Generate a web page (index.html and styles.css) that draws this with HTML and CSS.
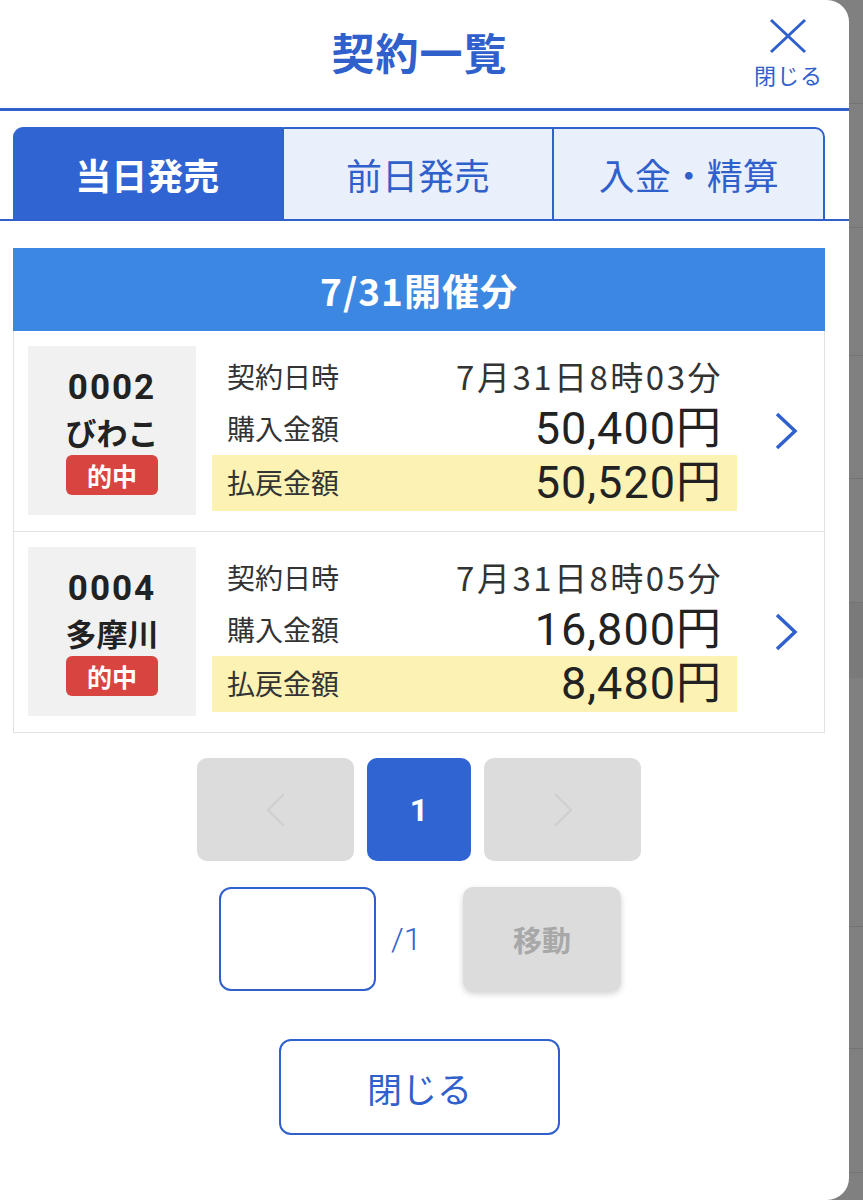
FILE: index.html
```html
<!DOCTYPE html>
<html lang="ja">
<head>
    <meta charset="UTF-8">
    <title>契約一覧</title>
    <meta name="viewport" content="width=device-width, initial-scale=1.0">
    <link rel="stylesheet" href="styles.css">
</head>
<body>

<div class="modal">
    <header class="modal-header">
        <h1>契約一覧</h1>
        <button class="close-x" type="button">
            <svg width="40" height="36" viewBox="0 0 40 36"><path d="M3 2 L37 34 M37 2 L3 34" stroke="#3060cc" stroke-width="3" fill="none"/></svg>
            <span>閉じる</span>
        </button>
    </header>

    <nav class="tabs">
        <div class="tab active">当日発売</div>
        <div class="tab">前日発売</div>
        <div class="tab last">入金・精算</div>
    </nav>

    <section class="day">
        <h2>7/31開催分</h2>

        <div class="contract">
            <div class="race">
                <p class="race-no">0002</p>
                <p class="race-name">びわこ</p>
                <span class="hit">的中</span>
            </div>
            <div class="info">
                <div class="row"><span class="label">契約日時</span><span class="date">7月31日8時03分</span></div>
                <div class="row"><span class="label">購入金額</span><span class="amount">50,400円</span></div>
                <div class="row payout"><span class="label">払戻金額</span><span class="amount">50,520円</span></div>
            </div>
            <div class="more">
                <svg width="26" height="40" viewBox="0 0 26 40"><path d="M4 3 L22 20 L4 37" stroke="#3060cc" stroke-width="3.5" fill="none"/></svg>
            </div>
        </div>

        <div class="contract">
            <div class="race">
                <p class="race-no">0004</p>
                <p class="race-name">多摩川</p>
                <span class="hit">的中</span>
            </div>
            <div class="info">
                <div class="row"><span class="label">契約日時</span><span class="date">7月31日8時05分</span></div>
                <div class="row"><span class="label">購入金額</span><span class="amount">16,800円</span></div>
                <div class="row payout"><span class="label">払戻金額</span><span class="amount">8,480円</span></div>
            </div>
            <div class="more">
                <svg width="26" height="40" viewBox="0 0 26 40"><path d="M4 3 L22 20 L4 37" stroke="#3060cc" stroke-width="3.5" fill="none"/></svg>
            </div>
        </div>
    </section>

    <div class="pager">
        <button class="page-btn arrow" type="button">
            <svg width="24" height="36" viewBox="0 0 24 36"><path d="M20 2 L4 18 L20 34" stroke="#cfcfcf" stroke-width="2" fill="none"/></svg>
        </button>
        <button class="page-btn current" type="button">1</button>
        <button class="page-btn arrow" type="button">
            <svg width="24" height="36" viewBox="0 0 24 36"><path d="M4 2 L20 18 L4 34" stroke="#cfcfcf" stroke-width="2" fill="none"/></svg>
        </button>
    </div>

    <div class="jump">
        <input class="jump-input" type="text">
        <span class="jump-total">/1</span>
        <button class="jump-btn" type="button">移動</button>
    </div>

    <div class="footer">
        <button class="close-btn" type="button">閉じる</button>
    </div>
</div>

</body>
</html>
```

FILE: styles.css
```css
body {
    margin: 0;
    padding: 0;
    background-color: #808080;
    background-image:
        linear-gradient(#737373, #737373),
        linear-gradient(#737373, #737373),
        linear-gradient(#737373, #737373),
        linear-gradient(#737373, #737373),
        linear-gradient(#737373, #737373),
        linear-gradient(#7a7a7a, #7a7a7a),
        linear-gradient(#737373, #737373),
        linear-gradient(#737373, #737373),
        linear-gradient(#737373, #737373);
    background-repeat: no-repeat;
    background-size: 100% 1px, 100% 1px, 100% 1px, 100% 1px, 100% 1px, 100% 76px, 100% 1px, 100% 1px, 100% 1px;
    background-position: 0 103px, 0 227px, 0 355px, 0 478px, 0 602px, 0 602px, 0 926px, 0 1048px, 0 1172px;
    font-family: "Noto Sans CJK JP", "Noto Sans", sans-serif;
    color: #222;
}

.modal {
    width: 849px;
    min-height: 1200px;
    background: #fff;
    border-radius: 0 22px 22px 0;
    overflow: hidden;
}

p {
    margin: 0;
}

button {
    font-family: inherit;
    cursor: pointer;
}

.modal-header {
    position: relative;
    height: 108px;
    border-bottom: 3px solid #3060cc;
    display: flex;
    justify-content: center;
    align-items: center;
}

.modal-header h1 {
    margin: 0 10px 6px 0;
    font-size: 43px;
    font-weight: bold;
    color: #3060cc;
    letter-spacing: 1px;
}

.close-x {
    position: absolute;
    top: 18px;
    right: 26px;
    background: none;
    border: none;
    padding: 0;
    display: flex;
    flex-direction: column;
    align-items: center;
    color: #3060cc;
}

.close-x span {
    font-size: 22px;
    margin-top: 4px;
    letter-spacing: 1px;
}

.tabs {
    display: flex;
    margin-top: 16px;
    padding: 0 24px 0 13px;
    border-bottom: 2px solid #3060cc;
}

.tab {
    flex: 1;
    height: 92px;
    display: flex;
    justify-content: center;
    align-items: center;
    font-size: 36px;
    color: #3060cc;
    background: #e9f0fb;
    border-top: 2px solid #3060cc;
    border-right: 2px solid #3060cc;
    box-sizing: border-box;
}

.tab.active {
    background: #3064d2;
    color: #fff;
    font-weight: bold;
    border-radius: 10px 0 0 0;
    border-top-color: #3064d2;
}

.tab.last {
    border-radius: 0 10px 0 0;
}

.day {
    margin: 27px 24px 0 13px;
}

.day h2 {
    margin: 0;
    height: 83px;
    display: flex;
    justify-content: center;
    align-items: center;
    background: #3c87e2;
    color: #fff;
    font-size: 37px;
    font-weight: bold;
    letter-spacing: 1px;
}

.contract {
    display: flex;
    align-items: center;
    padding: 15px 0 16px 14px;
    border: 1px solid #e2e2e2;
    border-top: none;
}

.race {
    width: 168px;
    height: 169px;
    background: #f1f1f1;
    display: flex;
    flex-direction: column;
    align-items: center;
    justify-content: center;
    flex-shrink: 0;
}

.race-no {
    font-size: 35px;
    font-weight: bold;
    line-height: 44px;
    letter-spacing: 2px;
    font-family: "Roboto", "Noto Sans CJK JP", sans-serif;
    color: #222;
}

.race-name {
    font-size: 31px;
    font-weight: bold;
    line-height: 44px;
    color: #222;
}

.hit {
    display: inline-block;
    width: 92px;
    height: 40px;
    line-height: 40px;
    text-align: center;
    margin-top: 1px;
    background: #d8443f;
    color: #fff;
    font-size: 25px;
    font-weight: bold;
    border-radius: 6px;
}

.info {
    flex: 1;
    margin-left: 16px;
}

.row {
    display: flex;
    justify-content: space-between;
    align-items: center;
    height: 52px;
    padding: 0 16px 0 15px;
}

.row.payout {
    height: 56px;
    background: #fbf2b4;
}

.label {
    font-size: 28px;
    line-height: 1.2;
    color: #333;
}

.date {
    font-size: 33px;
    line-height: 1.2;
    letter-spacing: 2.5px;
    margin-right: -2px;
    color: #333;
}

.amount {
    font-family: "Roboto", "Noto Sans CJK JP", sans-serif;
    font-size: 45px;
    line-height: 1;
    letter-spacing: 1px;
    margin-right: -1px;
    color: #222;
}

.more {
    width: 87px;
    display: flex;
    justify-content: center;
    padding-left: 10px;
    box-sizing: border-box;
}

.pager {
    display: flex;
    justify-content: center;
    gap: 13px;
    margin: 25px 0 0 -11px;
}

.page-btn {
    height: 103px;
    border: none;
    border-radius: 10px;
    display: flex;
    justify-content: center;
    align-items: center;
}

.page-btn.arrow {
    width: 157px;
    background: #dcdcdc;
}

.page-btn.current {
    width: 104px;
    background: #3064d2;
    color: #fff;
    font-size: 32px;
    font-weight: bold;
    font-family: "Roboto", sans-serif;
}

.jump {
    display: flex;
    align-items: center;
    margin: 26px 0 0 219px;
}

.jump-input {
    width: 157px;
    height: 104px;
    box-sizing: border-box;
    border: 2px solid #3060cc;
    border-radius: 12px;
    background: #fff;
}

.jump-total {
    width: 72px;
    margin-left: 15px;
    font-size: 32px;
    font-weight: 300;
    color: #3060cc;
    font-family: "Roboto", sans-serif;
}

.jump-btn {
    width: 158px;
    height: 104px;
    border: none;
    border-radius: 10px;
    background: #dcdcdc;
    color: #a8a8a8;
    font-size: 29px;
    font-weight: bold;
    box-shadow: 0 3px 6px rgba(0, 0, 0, 0.18);
}

.footer {
    display: flex;
    justify-content: center;
    margin: 48px 10px 0 0;
}

.close-btn {
    width: 281px;
    height: 96px;
    background: #fff;
    border: 2px solid #3060cc;
    border-radius: 12px;
    color: #3060cc;
    font-size: 35px;
}
```
